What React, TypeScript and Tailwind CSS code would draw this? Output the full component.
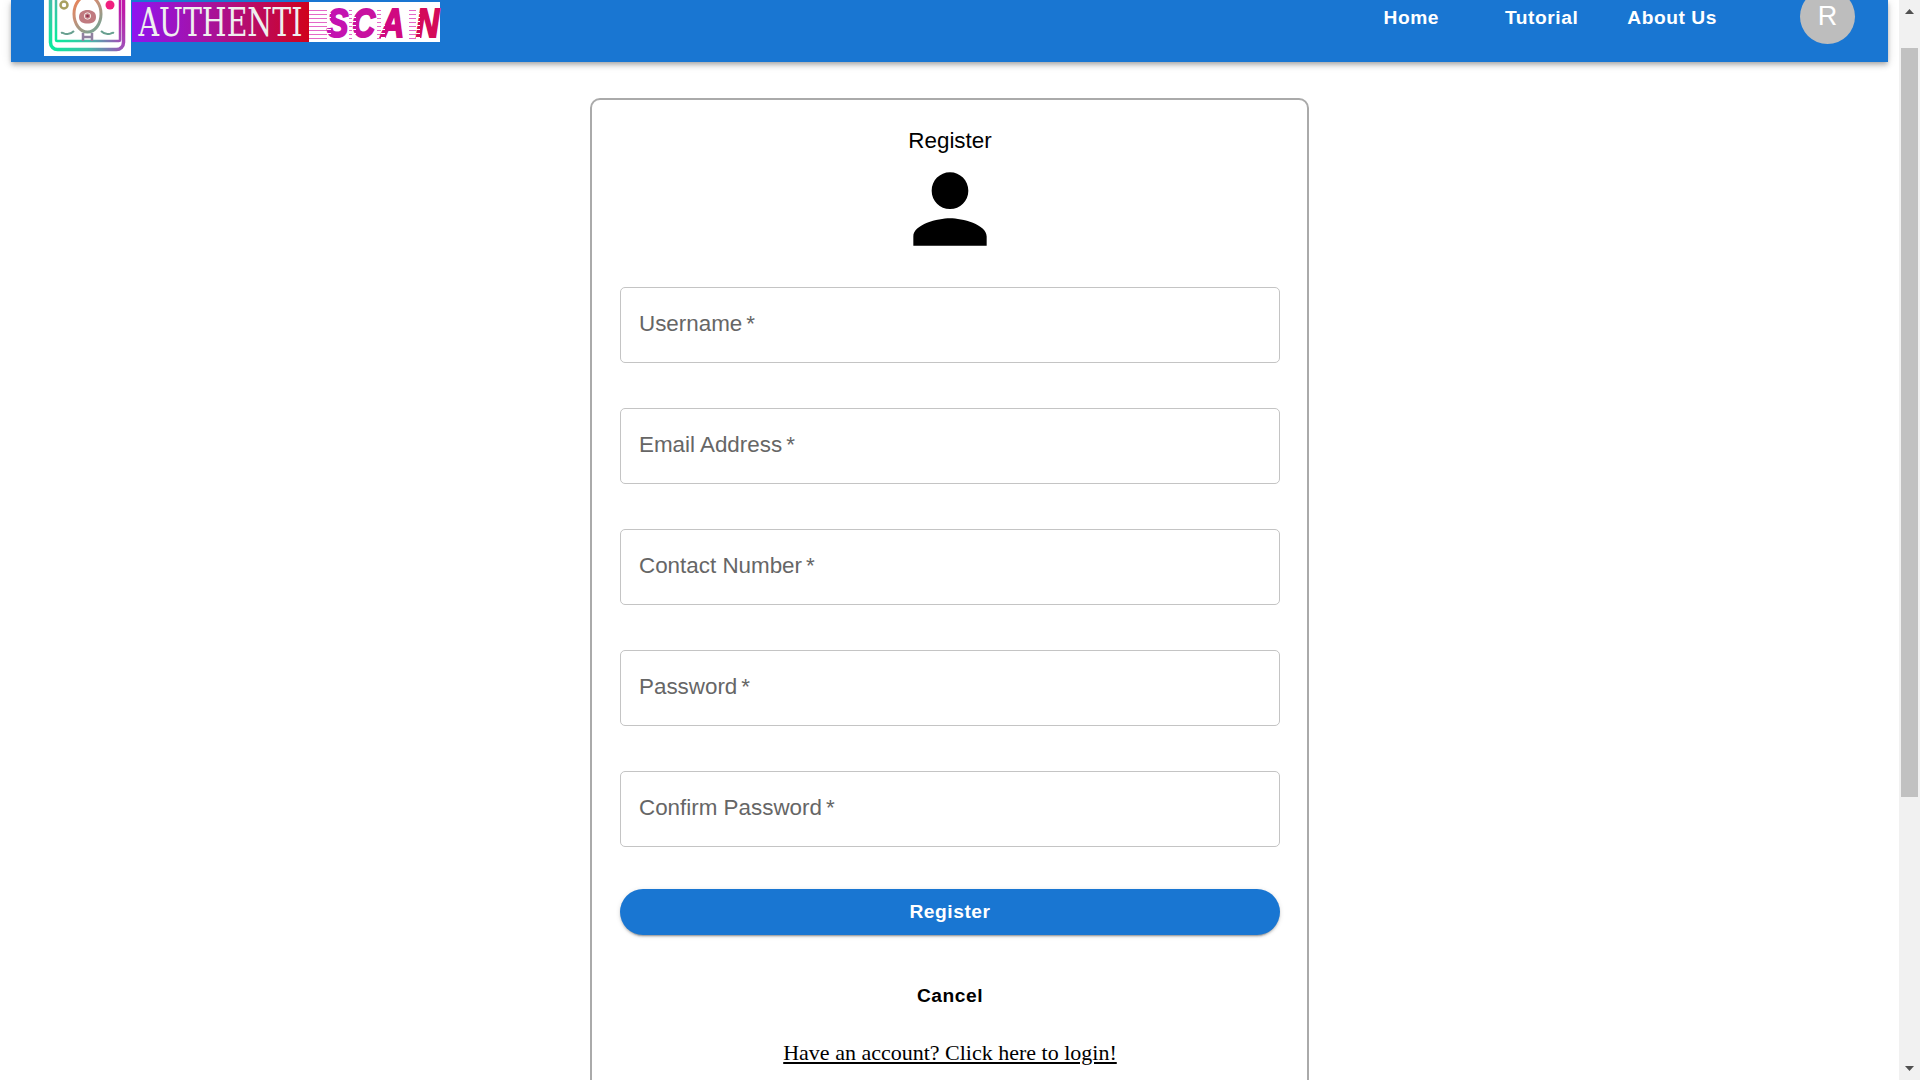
import React from "react";

const fields = ["Username", "Email Address", "Contact Number", "Password", "Confirm Password"];

const LogoIcon = () => (
  <svg className="block h-full w-full" viewBox="0 0 87 56" fill="none">
    <defs>
      <linearGradient id="frame" x1="0" y1="1" x2="1" y2="0.35">
        <stop offset="0" stopColor="#08ec9c" />
        <stop offset="0.35" stopColor="#40c0a8" />
        <stop offset="0.7" stopColor="#a050b8" />
        <stop offset="1" stopColor="#c018a8" />
      </linearGradient>
      <linearGradient id="face" x1="0" y1="0" x2="0.6" y2="1">
        <stop offset="0" stopColor="#f08050" />
        <stop offset="0.5" stopColor="#c89078" />
        <stop offset="1" stopColor="#80a090" />
      </linearGradient>
    </defs>
    <rect x="6.5" y="-14" width="73" height="63.5" rx="7" stroke="url(#frame)" strokeWidth="3.5" />
    <rect x="12" y="-10" width="64" height="51" rx="1" stroke="url(#frame)" strokeWidth="2.5" />
    <path d="M17 33c2-1 3 1 5 1s4 1 8-3M57 31c4 4 6 3 8 3s3-2 5-1" stroke="#68a090" strokeWidth="2" />
    <path d="M39 33v8M48 33v8M38 37h11" stroke="#9080a0" strokeWidth="2.5" />
    <ellipse cx="43.5" cy="14" rx="13.5" ry="18" fill="white" stroke="url(#face)" strokeWidth="3" />
    <path d="M35 17c0-5 4-7 8.5-7s8.5 2 8.5 7-4 6.5-8.5 6.5S35 22 35 17z" fill="#c07a80" />
    <circle cx="43.5" cy="16" r="3.2" fill="none" stroke="#f4e8e8" strokeWidth="1" />
    <circle cx="43.5" cy="16" r="1.3" fill="#903050" />
    <circle cx="20" cy="5" r="3.5" fill="none" stroke="#a8a060" strokeWidth="2.5" />
    <circle cx="66" cy="5" r="4.5" fill="#f02080" />
  </svg>
);

const ScanLetter = ({
  char,
  pad,
  width,
  color,
}: {
  char: string;
  pad: string;
  width: string;
  color: string;
}) => (
  <div className="flex h-full">
    <div
      className={`${pad} mt-[8px] h-[29px] bg-[repeating-linear-gradient(180deg,#e468c8_0,#e468c8_1.5px,transparent_1.5px,transparent_4px)]`}
    />
    <div className={`relative ${width} h-full`}>
      <span
        className={`block origin-left scale-x-[0.8] text-[40px] leading-[42px] ${color} [-webkit-text-stroke:2px_currentColor]`}
      >
        {char}
      </span>
      <span className="absolute left-0 top-[8px] h-[29px] w-[4px] bg-[repeating-linear-gradient(180deg,transparent_0,transparent_3px,#ffffff_3px,#ffffff_4px)]" />
    </div>
  </div>
);

const Logo = () => (
  <div className="flex self-end mb-[6px]">
    <div className="h-[56px] w-[87px] bg-white">
      <LogoIcon />
    </div>
    <div className="ml-[1px] mt-[2px] flex h-[40px] items-stretch">
      <div className="flex w-[177px] items-center justify-center bg-[linear-gradient(90deg,#8f14f0_0%,#a8129a_45%,#d0021b_100%)] font-['DejaVu_Serif',serif] text-[40px] leading-none text-[#efefef]">
        <span className="inline-block origin-center scale-x-[0.71] whitespace-nowrap">AUTHENTI</span>
      </div>
      <div className="flex w-[131px] bg-white font-['Liberation_Sans',sans-serif] font-bold italic">
        <ScanLetter char="S" pad="w-[18px]" width="w-[22px]" color="text-[#c412b0]" />
        <ScanLetter char="C" pad="w-[3px]" width="w-[25px]" color="text-[#c810a0]" />
        <ScanLetter char="A" pad="w-[4px]" width="w-[28px]" color="text-[#d00880]" />
        <ScanLetter char="N" pad="w-[7px]" width="w-[24px]" color="text-[#d40a5a]" />
      </div>
    </div>
  </div>
);

const Navbar = () => (
  <nav className="flex h-[62px] bg-[#1976d2] pl-[33px] pr-[33px] font-['Liberation_Sans',sans-serif] shadow-[0_2px_4px_-1px_rgba(0,0,0,0.2),0_4px_5px_0_rgba(0,0,0,0.14),0_1px_10px_0_rgba(0,0,0,0.12)]">
    <Logo />
    <div className="ml-auto flex h-[35px] items-center text-[19.2px] font-bold leading-none tracking-[0.55px] text-white">
      <a className="mr-[66px]">Home</a>
      <a className="mr-[49px]">Tutorial</a>
      <a>About Us</a>
    </div>
    <div className="-mt-[11px] ml-[83px] flex h-[55px] w-[55px] items-center justify-center rounded-full bg-[#bdbdbd] text-[27px] text-white">
      R
    </div>
  </nav>
);

const TextField = ({ label }: { label: string }) => (
  <div className="flex h-[76px] items-center rounded-[5px] border border-[#c4c4c4] pb-[2px] pl-[18px] text-[22.4px] text-[#666666]">
    {label}
    <span className="ml-[4px]">*</span>
  </div>
);

const RegisterCard = () => (
  <div className="ml-[579px] mt-[36px] w-[719px] rounded-[10px] border-2 border-[#aaaaaa] pb-[40px] pl-[28px] pr-[27px] pt-[28px] font-['Liberation_Sans',sans-serif]">
    <h1 className="text-center text-[22.4px] leading-[26px] text-black">Register</h1>
    <svg className="mx-auto block h-[110px] w-[110px]" viewBox="0 0 24 24" fill="black">
      <path d="M12 12c2.21 0 4-1.79 4-4s-1.79-4-4-4-4 1.79-4 4 1.79 4 4 4zm0 2c-2.67 0-8 1.34-8 4v2h16v-2c0-2.66-5.33-4-8-4z" />
    </svg>
    <div className="mt-[23px] flex flex-col gap-[45px]">
      {fields.map((field) => (
        <TextField key={field} label={field} />
      ))}
    </div>
    <button className="mt-[42px] block h-[46px] w-full rounded-[23px] bg-[#1976d2] text-[19.2px] font-bold tracking-[0.55px] text-white shadow-[0_3px_1px_-2px_rgba(0,0,0,0.2),0_2px_2px_0_rgba(0,0,0,0.14),0_1px_5px_0_rgba(0,0,0,0.12)]">
      Register
    </button>
    <div className="mt-[50px] text-center text-[19.2px] font-bold leading-[22px] tracking-[0.55px] text-black">
      Cancel
    </div>
    <div className="mt-[33px] text-center font-['Liberation_Serif',serif] text-[22px] leading-[26px] text-black underline">
      Have an account? Click here to login!
    </div>
  </div>
);

const Scrollbar = () => (
  <aside className="flex h-screen w-[21px] shrink-0 flex-col bg-[#f1f1f1]">
    <div className="flex h-[48px] shrink-0 justify-center pt-[9px]">
      <svg className="h-[5px] w-[9px]" viewBox="0 0 9 5" fill="#505050">
        <path d="M4.5 0 9 5H0z" />
      </svg>
    </div>
    <div className="mx-[2px] h-[749px] shrink-0 bg-[#c1c1c1]" />
    <div className="mt-auto flex justify-center pb-[9px]">
      <svg className="h-[5px] w-[9px]" viewBox="0 0 9 5" fill="#505050">
        <path d="M0 0h9L4.5 5z" />
      </svg>
    </div>
  </aside>
);

const App: React.FC = () => {
  return (
    <div className="flex h-screen overflow-hidden bg-white">
      <main className="min-w-0 flex-1 overflow-hidden px-[11px]">
        <Navbar />
        <RegisterCard />
      </main>
      <Scrollbar />
    </div>
  );
};

export default App;
